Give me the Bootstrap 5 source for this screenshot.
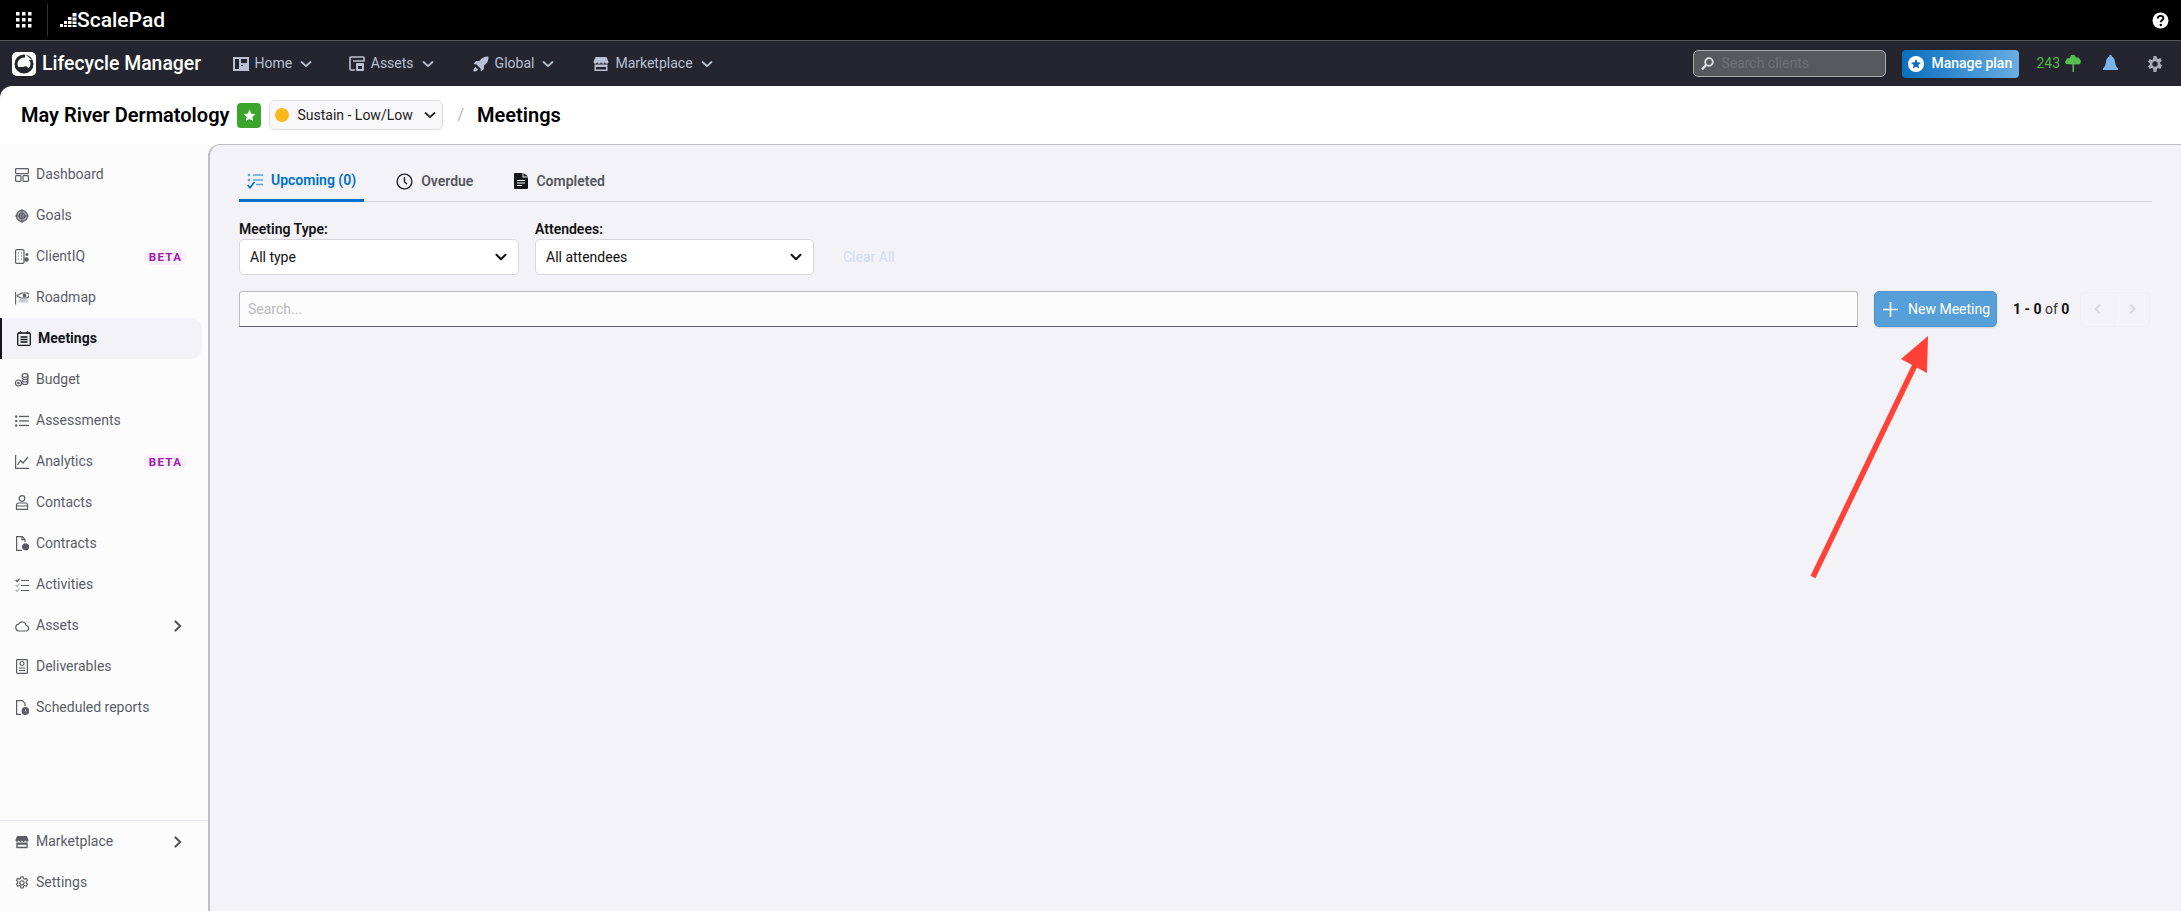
<!DOCTYPE html>
<html lang="en"><head><meta charset="utf-8"><title>Meetings</title>
<link rel="stylesheet" href="https://cdn.jsdelivr.net/npm/bootstrap@5.3.0/dist/css/bootstrap.min.css">
<style>
html,body{height:100%}
body{font-family:Roboto,"Liberation Sans",sans-serif;font-size:14px;background:#24252e;color:#111;overflow:hidden;height:911px}
.sv{display:block;flex:none}
.topbar{height:41px;background:#000;border-bottom:1px solid #55565c;padding:0 12px 0 16px}
.divline{width:1px;height:32px;background:#333;margin:0 12px 0 15px}
.sp-word{color:#fff;font-size:21px;font-weight:500;line-height:1}
.mainbar{height:45px;background:#24252e;padding:0 18px 0 12px}
.lm-word{color:#fff;font-size:19.4px;font-weight:500;margin:0 24px 0 6px;white-space:nowrap}
.mainbar .nav-link{color:#b9c0d4;font-size:14px;padding:0;display:flex;align-items:center;gap:6px;margin-right:23px}
.mainbar .nav-item:first-child .nav-link{margin-right:21px;gap:5.500px}
.mainbar .chev{margin-left:2px}
.clientsearch{width:193px;height:27px;background:#58595f;border:1px solid #a9aaae;border-radius:5px;padding:0 0 0 7px;margin-right:16px}
.clientsearch input{background:transparent;border:0;outline:0;color:#ddd;font-size:14px;width:160px;padding:0 0 0 7px}
.clientsearch input::placeholder{color:#6f7075;opacity:1}
.planbtn{height:28px;width:117px;background:linear-gradient(90deg,#0a6ebf,#69ade3);border:0;border-radius:4px;color:#fff;font-size:14px;font-weight:500;padding:0 0 0 6px;gap:7px;margin-right:17px}
.planbtn:hover{color:#fff}
.treecount{color:#4db848;font-size:14px;gap:5px;margin-right:22px}
.bellicon{margin-right:29px}
.pagehead{height:58px;background:#fff;border-radius:12px 0 0 0;padding:0 0 0 21px}
.pagehead h1{font-size:20px;font-weight:600;margin:0;white-space:nowrap;color:#000}
.starbadge{width:24px;height:25px;background:#3aa62c;border-radius:4px;margin:0 8px}
.planpick{width:174px;height:30px;background:#f8f8fa;border:1px solid #dfdfe3;border-radius:6px;padding:0 6px 0 5px;font-size:14px;color:#222}
.planpick i{width:14px;height:14px;border-radius:50%;background:#fbb81c;margin-right:8px}
.planpick .sv{color:#222}
.slash{color:#b5b5b5;font-size:16px;margin:0 13px 0 14px}
.bodywrap{height:767px;background:#fff}
.sidepane{width:208px;background:#fcfcfd;flex:none}
.sidepane .nav-link{height:41px;display:flex;align-items:center;gap:7px;padding:0 0 0 15px;color:#5a5c66;font-size:14px;margin-right:6px}
.sidepane .nav-link.current{background:#f2f2f7;color:#14151c;font-weight:700;border-left:2px solid #14151c;border-radius:0 12px 12px 0;padding-left:15px}
.betatag{margin-left:auto;margin-right:15px;width:43px;height:16px;line-height:16px;text-align:center;border-radius:8px;background:#f9f1fc;color:#a018ae;font-size:11.5px;font-weight:700;letter-spacing:1.3px}
.rightchev{margin-left:auto;margin-right:18px}
.sidetop{padding-top:10px}
.sidefoot{margin-top:auto;border-top:1px solid #e8e8ef;padding-bottom:8px}
.workarea{flex:1;background:#f2f2f7;border:1px solid #bdbdc2;border-width:1px 0 0 2px;border-radius:12px 0 0 0;padding:0 29px;position:relative}
.tabstrip{height:57px;border-bottom:1px solid #d3d3da;flex-wrap:nowrap}
.tabstrip .nav-link{height:40px;margin-top:17px;display:flex;align-items:center;gap:8px;padding:0 7px 2px 8px;color:#55565e;font-weight:600;font-size:14px;border-radius:0;margin-right:25px}
.tabstrip .nav-link.active{color:#0070c9;border-bottom:3px solid #0070c9;padding:0 8px 0 8px;margin-right:24px}
.tabstrip .nav-item:nth-child(2) .nav-link{margin-right:26px}
.filterrow{margin-top:17px;gap:16px}
.filtercell{width:280px}
.filtercell.narrow{width:279px}
.filtercell label{font-weight:600;font-size:14px;color:#111;line-height:20px;display:block;margin-bottom:0}
.filtercell .form-select{height:36px;font-size:14px;color:#111;border:1px solid #d8d8dd;border-radius:5px;padding:0 30px 0 10px;background-position:right 11px center;background-size:12px;background-image:url("data:image/svg+xml,%3csvg xmlns='http://www.w3.org/2000/svg' viewBox='0 0 12 12'%3e%3cpath fill='none' stroke='%23111' stroke-width='2' stroke-linecap='round' stroke-linejoin='round' d='M1.5 3.8 6 8.2l4.5-4.4'/%3e%3c/svg%3e")}
.clearlink{color:#cfe0ef;font-size:14px;margin-left:13px;height:36px;line-height:36px;font-weight:400}
.searchrow{margin-top:16px;height:36px}
.meetsearch{width:1619px;height:36px;font-size:14px;background:#fcfcfc;border:1px solid #bdbdc0;border-bottom:1px solid #5f5f64;border-radius:3px 3px 0 0;padding:0 8px}
.meetsearch::placeholder{color:#b9b9bd;opacity:1}
.newbtn{width:123px;height:36px;margin-left:16px;background:#569fd8;border:1px solid #4f93ca;border-radius:5px;color:#fff;font-size:14px;padding:0 0 0 8px;gap:10px;box-shadow:0 1px 2px rgba(0,0,0,.12)}
.newbtn:hover{background:#569fd8;color:#fff}
.pagecount{margin-left:16px;font-size:14px;white-space:nowrap;color:#333;width:67px}
.pagecount b{color:#111;font-weight:700}
.pagerbox{width:70px;height:35px;border:1px solid #eeeef3;border-radius:5px}
.pagerbox .btn{flex:1;padding:0;border:0;border-radius:0;display:flex;align-items:center;justify-content:center}
.pagerbox .btn+.btn{border-left:1px solid #eeeef3}
.callout{position:absolute;left:1600px;top:190px;pointer-events:none}
</style></head><body>
<svg width="0" height="0" class="position-absolute">
<defs>
<symbol id="chev" viewBox="0 0 12 12"><path fill="none" stroke="currentColor" stroke-width="1.8" stroke-linecap="round" stroke-linejoin="round" d="M1.5 4 6 8.2 10.5 4"/></symbol>
<symbol id="chevr" viewBox="0 0 12 12"><path fill="none" stroke="#55565e" stroke-width="2.2" stroke-linecap="round" stroke-linejoin="round" d="M3.5 1.5 8.2 6 3.5 10.5"/></symbol>
<symbol id="store" viewBox="0 0 16 16"><path fill="currentColor" d="M2.5 1h11L15.5 6c0 1-.8 1.8-1.8 1.8S12 7 11.8 6c-.2 1-1 1.8-1.9 1.8S8.200 7 8 6c-.2 1-1 1.8-1.900 1.800S4.400 7 4.200 6c-.2 1-1 1.800-1.900 1.800S.5 7 .5 6z"/><path fill="currentColor" d="M1.500 8.500h13V15h-13zM3 11v2.500h10V11z" fill-rule="evenodd"/></symbol>
</defs></svg>

<header class="topbar d-flex align-items-center">
<svg class="sv" width="16" height="16" viewBox="0 0 16 16" fill="#fff"><rect x="0" y="0" width="3.500" height="3.500"/><rect x="6" y="0" width="3.500" height="3.500"/><rect x="12" y="0" width="3.500" height="3.500"/><rect x="0" y="6" width="3.500" height="3.500"/><rect x="6" y="6" width="3.500" height="3.500"/><rect x="12" y="6" width="3.500" height="3.500"/><rect x="0" y="12" width="3.500" height="3.500"/><rect x="6" y="12" width="3.500" height="3.500"/><rect x="12" y="12" width="3.500" height="3.500"/></svg>
<span class="divline"></span>
<svg class="sv" width="17" height="16" viewBox="0 0 17 16" fill="#fff"><rect x="0" y="12" width="3" height="3"/><rect x="4" y="9" width="3" height="3"/><rect x="4" y="13" width="3" height="2"/><rect x="8" y="9" width="3.500" height="3"/><rect x="8" y="13" width="3.500" height="2"/><rect x="12.500" y="1" width="4" height="3.500"/><rect x="12.500" y="5.500" width="4" height="3"/><rect x="12.500" y="9.500" width="4" height="2.500"/><rect x="12.500" y="13" width="4" height="2"/><rect x="8" y="5" width="3.500" height="3"/></svg>
<span class="sp-word">ScalePad</span>
<svg class="sv ms-auto" width="17" height="17" viewBox="0 0 17 17"><circle cx="8.500" cy="8.500" r="8" fill="#fff"/><path d="M5.800 6.500c0-1.600 1.200-2.600 2.800-2.600s2.800 1 2.800 2.400c0 2.100-2.600 2-2.600 4" fill="none" stroke="#000" stroke-width="1.900"/><circle cx="8.800" cy="13" r="1.200" fill="#000"/></svg>
</header>

<nav class="mainbar navbar navbar-expand d-flex align-items-center flex-nowrap justify-content-start">
<svg class="sv" width="24" height="24" viewBox="0 0 24 24"><rect x="0" y="0" width="24" height="24" rx="5" fill="#fff"/><circle cx="12" cy="12" r="8" fill="none" stroke="#24252e" stroke-width="3"/><path d="M4 15c3 5 10 6 15 3l-5-4-3 1z" fill="#24252e"/><circle cx="13" cy="10" r="3" fill="#fff"/><path d="M13 2 20 8l-7 0z" fill="#fff"/></svg>
<span class="lm-word">Lifecycle Manager</span>
<ul class="navbar-nav flex-row">
<li class="nav-item"><a class="nav-link" href="#"><svg class="sv" width="16" height="16" viewBox="0 0 16 16"><path fill="currentColor" fill-rule="evenodd" d="M0 1h16v14H0zM2 3v10h4V3zM8 3v4h6V3zM8 9v1h2V9z"/></svg>Home<svg class="sv chev" width="12" height="12"><use href="#chev"/></svg></a></li>
<li class="nav-item"><a class="nav-link" href="#"><svg class="sv" width="16" height="16" viewBox="0 0 16 16" fill="none" stroke="currentColor" stroke-width="1.600"><path d="M6 14H2a1 1 0 0 1-1-1V2a1 1 0 0 1 1-1h12a1 1 0 0 1 1 1v3H4"/><rect x="7" y="7" width="8" height="8" rx="1" fill="currentColor" stroke="none"/><rect x="9" y="10" width="4" height="3" fill="#24252e" stroke="none"/></svg>Assets<svg class="sv chev" width="12" height="12"><use href="#chev"/></svg></a></li>
<li class="nav-item"><a class="nav-link" href="#"><svg class="sv" width="16" height="16" viewBox="0 0 16 16"><path fill="currentColor" d="M15.500.5c-4-.3-7 1.200-9 4.500H3L.5 8l3 .5 4 4 .5 3L11 13V9.500c3.300-2 4.800-5 4.500-9zM2.500 11c-1.500.5-2 2.500-2 4.500 2 0 4-.5 4.500-2z"/></svg>Global<svg class="sv chev" width="12" height="12"><use href="#chev"/></svg></a></li>
<li class="nav-item"><a class="nav-link" href="#"><svg class="sv" width="16" height="16"><use href="#store"/></svg>Marketplace<svg class="sv chev" width="12" height="12"><use href="#chev"/></svg></a></li>
</ul>
<div class="ms-auto d-flex align-items-center">
<div class="clientsearch d-flex align-items-center"><svg class="sv" width="13" height="14" viewBox="0 0 13 14" fill="none" stroke="#e2e2e4" stroke-width="1.800"><circle cx="8" cy="5" r="3.800"/><path d="M5 8 1 12.500" stroke-width="2.400"/></svg><input type="text" placeholder="Search clients" aria-label="Search clients"></div>
<a class="btn planbtn d-flex align-items-center" href="#"><svg class="sv" width="16" height="16" viewBox="0 0 16 16"><circle cx="8" cy="8" r="8" fill="#fff"/><path d="m8 3 1.500 3.300 3.500.4-2.600 2.400.7 3.500L8 10.800l-3.100 1.800.7-3.500L3 6.700l3.500-.4z" fill="#0a6ebf"/></svg>Manage plan</a>
<div class="treecount d-flex align-items-center"><span>243</span><svg class="sv" width="16" height="17" viewBox="0 0 16 17"><path fill="#55c04c" d="M6 0h3.500L11 2.500h2.500L16 6l-1 3.200-6 .3V17H7.500V9.500L1 9 0 7l2-3.500 3-.5z"/></svg></div>
<svg class="sv bellicon" width="15" height="17" viewBox="0 0 15 17"><path fill="#78b4ea" d="M7.500 0C8.500 0 9 .7 9 1.700 11 2.500 11.800 4.500 12 7c.2 3 1.500 5 3 6.500V15H0v-1.500C1.500 12 2.800 10 3 7c.2-2.500 1-4.500 3-5.300C6 .7 6.500 0 7.500 0z"/></svg>
<svg class="sv" width="16" height="16" viewBox="0 0 16 16"><path fill="#a9abb5" fill-rule="evenodd" d="M6.500 0h3l.4 2.200 1.300.7L13.300 2l1.600 2.700-1.700 1.500v1.600l1.700 1.500L13.300 13l-2.100-.9-1.300.7L9.500 16h-3l-.4-3.200-1.300-.7-2.100.9L1.100 10.300l1.700-1.500V7.200L1.100 5.700 2.700 3l2.100.9 1.300-.7zM8 5.300a2.700 2.700 0 1 0 0 5.400 2.700 2.700 0 0 0 0-5.400z"/></svg>
</div>
</nav>

<div class="pagehead d-flex align-items-center">
<h1>May River Dermatology</h1>
<span class="starbadge d-flex align-items-center justify-content-center"><svg class="sv" width="13" height="13" viewBox="0 0 16 16"><path d="m8 1 2.200 4.700 5.100.6-3.800 3.500 1 5.100L8 12.400l-4.500 2.500 1-5.100L.7 6.300l5.100-.6z" fill="#fff"/></svg></span>
<div class="planpick d-flex align-items-center"><i></i><span>Sustain - Low/Low</span><svg class="sv ms-auto" width="12" height="12"><use href="#chev"/></svg></div>
<span class="slash">/</span>
<h1>Meetings</h1>
</div>

<div class="bodywrap d-flex">
<aside class="sidepane d-flex flex-column">
<nav class="nav flex-column sidetop">
<a class="nav-link" href="#"><svg class="sv" width="14" height="14" viewBox="0 0 14 14" fill="none" stroke="currentColor" stroke-width="1.200"><rect x=".6" y=".6" width="12.800" height="5" rx=".8"/><rect x=".6" y="7.600" width="5.400" height="5.800" rx=".8"/><rect x="8" y="7.600" width="5.400" height="5.800" rx=".8"/></svg>Dashboard</a>
<a class="nav-link" href="#"><svg class="sv" width="14" height="14" viewBox="0 0 14 14" fill="none" stroke="currentColor" stroke-width="1.100"><circle cx="7" cy="7" r="5.600" fill="#a9abb3"/><circle cx="7" cy="7" r="2.700"/><path d="M7 0v14M0 7h14"/></svg>Goals</a>
<a class="nav-link" href="#"><svg class="sv" width="14" height="15" viewBox="0 0 14 15" fill="none" stroke="currentColor" stroke-width="1.200"><rect x=".6" y=".6" width="8.400" height="13.800" rx="1.200"/><path d="M3 4h1M6 4h1M3 7h1M6 7h1M3 10h1M6 10h1"/><circle cx="11.500" cy="10.500" r="1.700" fill="currentColor"/><circle cx="12" cy="5.500" r=".9" fill="currentColor"/></svg>ClientIQ<span class="betatag">BETA</span></a>
<a class="nav-link" href="#"><svg class="sv" width="14" height="14" viewBox="0 0 14 14" fill="none" stroke="currentColor" stroke-width="1.100"><path d="M.6 1v12.500"/><path d="M2 4.500 7 2h5a2 2 0 0 1 2 2.500A3 3 0 0 1 11 7H6L2 5z"/><circle cx="9.500" cy="4.500" r="1.300" fill="currentColor"/><path d="M2.500 9.500 6 8h6l1.500 2-1.500 1.500H5z" fill="#c9cace" stroke="none"/></svg>Roadmap</a>
<a class="nav-link current" href="#"><svg class="sv" width="14" height="15" viewBox="0 0 14 15" fill="none" stroke="#14151c" stroke-width="1.300"><rect x=".7" y="2" width="12.600" height="12.300" rx="1"/><path d="M3.500 0v3M10.500 0v3M3.500 6h7M3.500 8.500h7M3.500 11h7"/></svg>Meetings</a>
<a class="nav-link" href="#"><svg class="sv" width="14" height="14" viewBox="0 0 14 14" fill="none" stroke="currentColor" stroke-width="1.100"><circle cx="3.500" cy="10" r="3"/><circle cx="3.500" cy="10" r=".8" fill="currentColor"/><ellipse cx="10" cy="2.500" rx="3" ry="1.900"/><path d="M7 4.500c0 1 1 2 3 2s3-1 3-2V2.500M7 7c0 1 1 2 3 2s3-1 3-2V4M7 9.500c0 1 1 2 3 2s3-1 3-2V7"/></svg>Budget</a>
<a class="nav-link" href="#"><svg class="sv" width="14" height="12" viewBox="0 0 14 12" fill="currentColor"><circle cx="1.200" cy="1.500" r="1.200"/><circle cx="1.200" cy="6" r="1.200"/><circle cx="1.200" cy="10.500" r="1.200"/><rect x="4" y=".8" width="10" height="1.300"/><rect x="4" y="5.300" width="10" height="1.300"/><rect x="4" y="9.800" width="10" height="1.300"/></svg>Assessments</a>
<a class="nav-link" href="#"><svg class="sv" width="14" height="14" viewBox="0 0 14 14" fill="none" stroke="currentColor" stroke-width="1.200"><path d="M.6 0v13.400H14"/><path d="m2.500 10 3-4.500 2.500 2.500L13 2"/></svg>Analytics<span class="betatag">BETA</span></a>
<a class="nav-link" href="#"><svg class="sv" width="14" height="15" viewBox="0 0 14 15" fill="none" stroke="currentColor" stroke-width="1.200"><circle cx="7" cy="3.500" r="2.800"/><path d="M1.500 14.400V10a2 2 0 0 1 2-2h7a2 2 0 0 1 2 2v4.400zM1.500 11h11"/></svg>Contacts</a>
<a class="nav-link" href="#"><svg class="sv" width="14" height="15" viewBox="0 0 14 15" fill="none" stroke="currentColor" stroke-width="1.200"><path d="M7 14.400H1.600V.6h5.600L10 3.400V6"/><path d="M7 .6v3h3"/><circle cx="10.500" cy="10.800" r="3" fill="currentColor"/></svg>Contracts</a>
<a class="nav-link" href="#"><svg class="sv" width="14" height="14" viewBox="0 0 14 14" fill="none" stroke="currentColor" stroke-width="1.200"><path d="m.6 2 1.500 1.500L4.500.6"/><path d="m.6 7 1.500 1.500L4.500 5.600M.6 12l1.500 1.500L4.500 10.600" stroke="#b5b6bb"/><path d="M6 2.500h8M6 7.500h8M6 12.500h8"/></svg>Activities</a>
<a class="nav-link" href="#"><svg class="sv" width="14" height="12" viewBox="0 0 15 12" fill="none" stroke="currentColor" stroke-width="1.200"><path d="M4 11.300h7.500a2.900 2.900 0 0 0 .4-5.800A4.300 4.300 0 0 0 3.800 4 3.700 3.700 0 0 0 4 11.300z"/></svg>Assets<svg class="sv rightchev" width="12" height="12"><use href="#chevr"/></svg></a>
<a class="nav-link" href="#"><svg class="sv" width="14" height="15" viewBox="0 0 14 15" fill="none" stroke="currentColor" stroke-width="1.200"><rect x="1.600" y=".6" width="10.800" height="13.800" rx=".8"/><circle cx="7" cy="4.500" r="2"/><path d="M4 9h6M4 11.500h6"/></svg>Deliverables</a>
<a class="nav-link" href="#"><svg class="sv" width="14" height="15" viewBox="0 0 14 15" fill="none" stroke="currentColor" stroke-width="1.200"><path d="M6 14.400H1.600V.6h5.600L10 3.400V6"/><circle cx="10.500" cy="11" r="3.300" fill="currentColor"/><path d="M10.500 9.500V11l1 .8" stroke="#fff" stroke-width=".9"/></svg>Scheduled reports</a>
</nav>
<nav class="nav flex-column sidefoot">
<a class="nav-link" href="#"><svg class="sv" width="14" height="14"><use href="#store"/></svg>Marketplace<svg class="sv rightchev" width="12" height="12"><use href="#chevr"/></svg></a>
<a class="nav-link" href="#"><svg class="sv" width="14" height="14" viewBox="0 0 16 16"><path fill="none" stroke="currentColor" stroke-width="1.300" d="M6.700.8h2.600l.4 2.100 1.300.7 2-.8 1.300 2.300-1.600 1.400v1.500l1.600 1.400-1.300 2.300-2-.8-1.300.7-.4 2.100H6.700l-.4-2.100-1.300-.7-2 .8L1.700 9.400l1.600-1.400V6.500L1.700 5.100 3 2.800l2 .8 1.300-.7z"/><circle cx="8" cy="7.800" r="2.400" fill="none" stroke="currentColor" stroke-width="1.300"/></svg>Settings</a>
</nav>
</aside>

<main class="workarea">
<ul class="nav tabstrip">
<li class="nav-item"><a class="nav-link active" href="#"><svg class="sv" width="16" height="16" viewBox="0 0 16 16" fill="none" stroke="#0070c9" stroke-width="1.300"><circle cx="2" cy="2" r="1.300" fill="#5aa5e0" stroke="none"/><circle cx="2" cy="7" r="1.300" fill="#5aa5e0" stroke="none"/><path d="M6 2h10M6 7h10M9 11.500h7" stroke="#5aa5e0"/><path d="m.8 12 2.200 2.800L7.500 9" stroke-width="1.600"/></svg>Upcoming (0)</a></li>
<li class="nav-item"><a class="nav-link" href="#"><svg class="sv" width="17" height="17" viewBox="0 0 17 17" fill="none" stroke="#222" stroke-width="1.400"><circle cx="8.500" cy="8.500" r="7.400"/><path d="M8.500 4v5l2.500 2"/></svg>Overdue</a></li>
<li class="nav-item"><a class="nav-link" href="#"><svg class="sv" width="14" height="16" viewBox="0 0 14 16"><path fill="#14151c" d="M1 0h7.500v4.500H14V15a1 1 0 0 1-1 1H1a1 1 0 0 1-1-1V1a1 1 0 0 1 1-1z"/><path fill="#14151c" d="M9.500 0 14 3.500H9.500z"/><path stroke="#fff" stroke-width="1.200" d="M3 7.500h8M3 10h8M3 12.500h5"/></svg>Completed</a></li>
</ul>
<div class="filterrow d-flex align-items-end">
<div class="filtercell"><label for="mt">Meeting Type:</label><select id="mt" class="form-select"><option>All type</option></select></div>
<div class="filtercell narrow"><label for="at">Attendees:</label><select id="at" class="form-select"><option>All attendees</option></select></div>
<span class="clearlink">Clear All</span>
</div>
<div class="searchrow d-flex align-items-center">
<input class="form-control meetsearch" type="text" placeholder="Search..." aria-label="Search">
<button class="btn newbtn d-flex align-items-center" type="button"><svg class="sv" width="15" height="15" viewBox="0 0 15 15" stroke="#fff" stroke-width="1.600"><path d="M7.500 0v15M0 7.500h15"/></svg>New Meeting</button>
<span class="pagecount"><b>1 - 0</b> of <b>0</b></span>
<div class="pagerbox btn-group"><button class="btn" type="button" disabled aria-label="Previous"><svg class="sv" width="10" height="12" viewBox="0 0 10 12" fill="none" stroke="#c9c9ce" stroke-width="1.800"><path d="M7 1.500 2.500 6 7 10.500"/></svg></button><button class="btn" type="button" disabled aria-label="Next"><svg class="sv" width="10" height="12" viewBox="0 0 10 12" fill="none" stroke="#c9c9ce" stroke-width="1.800"><path d="M3 1.500 7.500 6 3 10.500"/></svg></button></div>
</div>
<svg class="callout" width="130" height="250" viewBox="0 0 130 250"><path d="M3 242 105 30" stroke="#ff4136" stroke-width="5.500" fill="none"/><path d="M118 1 117 38 91 24z" fill="#ff4136"/></svg>
</main>
</div>
<script src="https://cdn.jsdelivr.net/npm/bootstrap@5.3.0/dist/js/bootstrap.bundle.min.js"></script>
</body></html>
